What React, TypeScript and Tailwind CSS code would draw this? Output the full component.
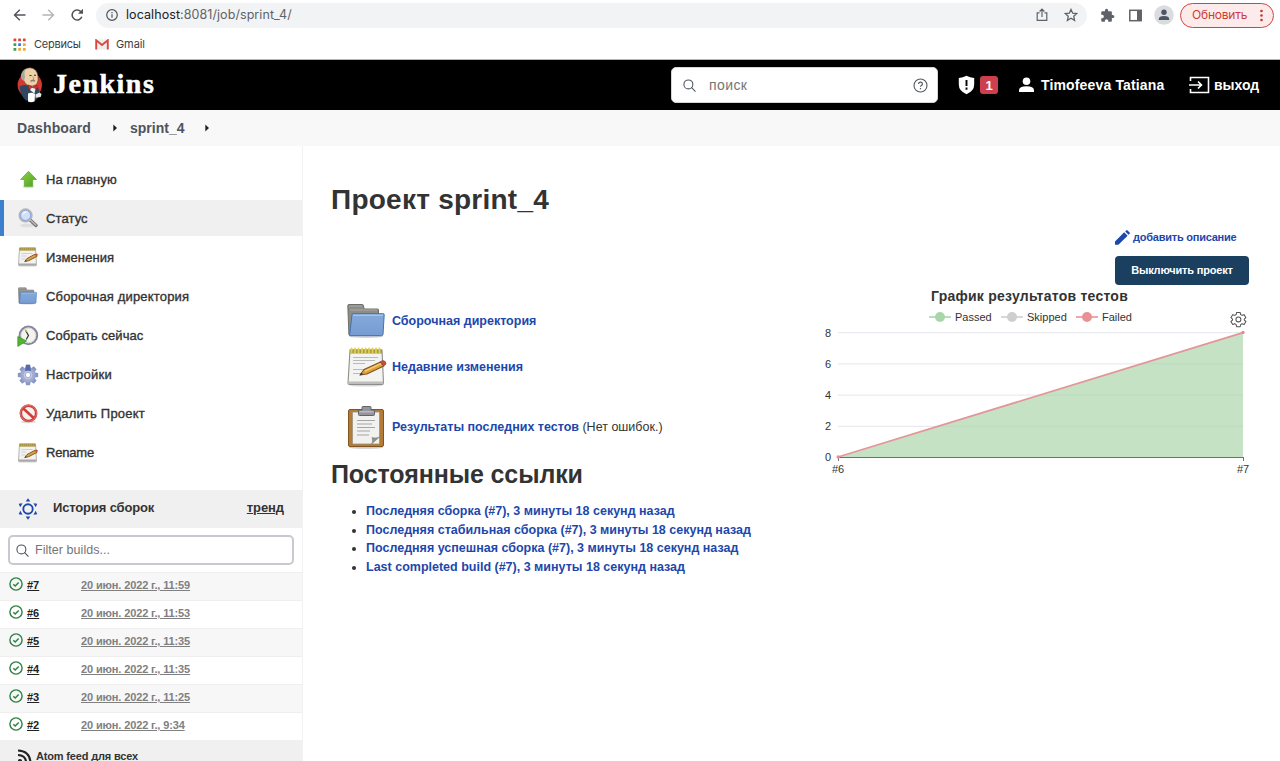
import type { ReactNode } from 'react';

type IconProps = { className?: string };

function ArrowUp() {
  return (
    <svg width="21" height="21" viewBox="0 0 20 20">
      <defs>
        <linearGradient id="up" x1="0" y1="0" x2="1" y2="1">
          <stop offset="0" stopColor="#8fd44a" />
          <stop offset="1" stopColor="#4f9e1f" />
        </linearGradient>
      </defs>
      <ellipse cx="10" cy="17" rx="6" ry="1.3" fill="#ddd" />
      <path d="M10 2.2 17.6 10H14v6.5H6V10H2.6z" fill="url(#up)" stroke="#5fae38" strokeWidth=".8" strokeLinejoin="round" />
    </svg>
  );
}

function Magnifier() {
  return (
    <svg width="20" height="20" viewBox="0 0 20 20">
      <ellipse cx="9" cy="17.4" rx="7" ry="1.8" fill="#dedede" />
      <path d="M12.4 12.2 18 17.4" stroke="#777" strokeWidth="3.4" strokeLinecap="round" />
      <path d="M12.6 12.2 17.8 17" stroke="#bdbdbd" strokeWidth="1.3" strokeLinecap="round" />
      <circle cx="7.6" cy="7.4" r="6.1" fill="#cfe0f8" stroke="#b3b5be" strokeWidth="2" />
      <circle cx="7.6" cy="7.4" r="5" fill="none" stroke="#7d9be0" strokeWidth=".8" />
      <path d="M4 7.5a4 4 0 0 1 6-3.6C8 4.500 5.500 5.500 4 7.500z" fill="#f4f9ff" />
    </svg>
  );
}

function NotepadSmall() {
  return (
    <svg width="20" height="20" viewBox="0 0 20 20">
      <path d="M1.500 1h16l1 16.500q0 1.300-1 1.300h-16q-1 0-1-1.300z" fill="#f2f2f0" stroke="#a3a3a0" strokeWidth=".8" />
      <path d="M.6 16.500h17.800v2H.6z" fill="#a9a9a7" />
      <path d="M1.500.6h16v3h-16z" fill="#a8923c" />
      <path d="M3 2h13" stroke="#cdb957" strokeWidth="1" strokeDasharray="1.200 .8" />
      <path d="M3.500 6.500h11M3.500 9h5M3.500 12h4" stroke="#c9c9cd" strokeWidth=".8" />
      <path d="M6.800 14.500l2.200-3 8-4.300 2 2.200-8.300 4.300z" fill="#d9a044" stroke="#7a5420" strokeWidth=".9" strokeLinejoin="round" />
      <path d="M16.700 7.300l1.500-.8q1.700.2 1.700 1.800l-1.500.9z" fill="#cc4a3d" />
      <path d="M6.400 14.800l1.200-1.600 1.200.9z" fill="#333" />
    </svg>
  );
}

function Notepad() {
  return (
    <svg width="40" height="40" viewBox="0 0 40 40">
      <ellipse cx="19" cy="38" rx="17" ry="1.600" fill="#d8d8d8" />
      <path d="M3 3h32l1.500 33a1.500 1.500 0 0 1-1.500 1.500H2.500A1.500 1.500 0 0 1 1 36z" fill="#f3f3f1" stroke="#8d8d8a" strokeWidth="1.100" />
      <path d="M1.500 34.500h34.800v2.500H1.500z" fill="#bdbdba" />
      <path d="M3 2.500h32v4H3z" fill="#a59a4c" />
      <path d="M4.500 1.500v4.500M8 1.500v4.500M11.500 1.500v4.500M15 1.500v4.500M18.500 1.500v4.500M22 1.500v4.500M25.500 1.500v4.500M29 1.500v4.500M32.500 1.500v4.500" stroke="#e2cf4e" strokeWidth="1.800" strokeLinecap="round" />
      <path d="M6 10.500h25M6 13.500h22M6 16.500h12M6 22.500h13M6 26.500h10" stroke="#b9b9c0" strokeWidth="1" />
      <path d="M13 28l4-5.500 16.500-7.500 3.300 4-17 8z" fill="#e0a13a" stroke="#7a5420" strokeWidth="1.100" strokeLinejoin="round" />
      <path d="M18 24.200l16-7.500" stroke="#f6cf78" strokeWidth="1.300" />
      <path d="M33 14.800l3-1.300q3.200.5 3 3.500L36.800 19z" fill="#cc4a3d" stroke="#9b4438" strokeWidth=".7" />
      <path d="M12.500 28.400l1.700-2.600 2 1.500z" fill="#333" />
    </svg>
  );
}

function Folder({ size }: { size: number }) {
  return (
    <svg width={size} height={size} viewBox="0 0 40 40">
      <defs>
        <linearGradient id="fold" x1="0" y1="0" x2="0" y2="1">
          <stop offset="0" stopColor="#86a9da" />
          <stop offset="1" stopColor="#759cd3" />
        </linearGradient>
      </defs>
      <ellipse cx="19" cy="35.500" rx="17" ry="1.500" fill="#d4d4d4" />
      <path d="M.8 4.500q0-1 1-1h13.500q1 0 1.200 1l.5 3.500h13.500q1 0 1 1V34.500H3q-1 0-1.100-1z" fill="#8c8c88" stroke="#6d6d6a" strokeWidth="1" />
      <path d="M2 5h13M3 9h27" stroke="#aaa9a5" strokeWidth="1" />
      <path d="M6 12.700h30.300q1 0 .9 1L36 33.500q-.1 1.200-1.500 1.200H3.500q-1 0-.8-1L5 13.700q.1-1 1-1z" fill="url(#fold)" stroke="#4470b4" strokeWidth="1" />
      <path d="M6 14.200h30" stroke="#b8cfee" strokeWidth="1" />
    </svg>
  );
}

function BuildClock() {
  return (
    <svg width="22" height="22" viewBox="0 0 22 22">
      <circle cx="11.400" cy="10.400" r="8.800" fill="#f4f4ee" stroke="#83859a" strokeWidth="2" />
      <circle cx="11.400" cy="10.400" r="7.400" fill="none" stroke="#c9cad6" strokeWidth=".8" />
      <path d="M8.500 5.200l3 5.300-2.300 4" fill="none" stroke="#333" strokeWidth="1.200" />
      <path d="M8 4.500l2 2" stroke="#d9bd45" strokeWidth="1.500" />
      <path d="M.8 11.500 9.600 16 .8 21.400z" fill="#52b52f" stroke="#3a8c22" strokeWidth=".7" />
    </svg>
  );
}

function Cog() {
  return (
    <svg width="22" height="22" viewBox="0 0 22 22">
      <g fill="#8a98c6">
        {[0, 45, 90, 135, 180, 225, 270, 315].map((a) => (
          <path key={a} d="M9 .8h4l.8 5H8.200z" transform={`rotate(${a} 11 11)`} />
        ))}
      </g>
      <circle cx="11" cy="11" r="7.400" fill="#a3add2" stroke="#8f9ac4" strokeWidth=".6" />
      <path d="M9 .8h4l1 6.200H8z" fill="#586ba8" />
      <circle cx="11" cy="11" r="4.300" fill="#c6cce4" />
      <circle cx="11" cy="11" r="2.700" fill="#fff" stroke="#8f9ac4" strokeWidth=".8" />
    </svg>
  );
}

function Forbidden() {
  return (
    <svg width="21" height="21" viewBox="0 0 20 20">
      <ellipse cx="10" cy="18" rx="7" ry="1.400" fill="#e5dcdc" />
      <circle cx="10" cy="9.800" r="7.300" fill="#f6f2f2" stroke="#cf3f3a" strokeWidth="2.500" />
      <path d="M4.800 5 15.200 14.600" stroke="#cf3f3a" strokeWidth="2.500" />
      <circle cx="10" cy="9.800" r="7.700" fill="none" stroke="#e88480" strokeWidth=".7" />
    </svg>
  );
}

function Clipboard() {
  return (
    <svg width="40" height="44" viewBox="0 0 40 44">
      <ellipse cx="19" cy="42.500" rx="17" ry="1.300" fill="#ccc" />
      <rect x="1.500" y="4.500" width="35" height="37" rx="1.500" fill="#b27b38" stroke="#83561f" strokeWidth="1" />
      <path d="M5.500 7h27v32h-27z" fill="#f1f1f0" stroke="#9d9380" strokeWidth=".8" />
      <path d="M10 15.500h18M10 19h15M10 22.500h18M10 26h13M10 30h12" stroke="#a5a5a5" strokeWidth="1" />
      <path d="M24.500 39c1.500-2 1-4.500.5-6.500 2.500.8 5 .5 7.500-.5z" fill="#8f9088" stroke="#777" strokeWidth=".5" />
      <path d="M15 5V2.500q0-1 1-1h7q1 0 1 1V5h2.500q1 0 1 1v3.500q0 1-1 1h-14q-1 0-1-1V6q0-1 1-1z" fill="#95959b" stroke="#63636b" strokeWidth="1" />
      <path d="M12.500 6.800h14.200" stroke="#c3c3c9" strokeWidth="1.200" />
    </svg>
  );
}

function Butler() {
  return (
    <svg width="26" height="36" viewBox="0 0 26 36">
      <ellipse cx="12.800" cy="18" rx="12.200" ry="12.500" fill="#d33833" />
      <path d="M2.500 19.500Q9 16.500 14 20l7 .5 2.500 7-5 6H9Q3.500 29 2.500 19.500z" fill="#2f4763" />
      <path d="M13 19.500h6l-1.500 7-4-3z" fill="#f5f3ea" />
      <path d="M5 7.500Q6 1 13 .8q7 .4 8 8.700 1 9-5.500 9.500Q9 19.500 6.500 13z" fill="#efd0a7" stroke="#5b4a3c" strokeWidth=".6" />
      <path d="M3.800 8.500Q5 3.500 8.200 2.500 6.800 6 8 10l-1 4Q3.600 12.500 3.800 8.500z" fill="#a9a69c" />
      <path d="M12.500 8.500h2M17 8.300h2" stroke="#33312c" strokeWidth="1.100" />
      <path d="M16 9.500l1 3-1.500.3" fill="none" stroke="#a77e5b" strokeWidth=".7" />
      <path d="M13.500 14.300q2-1.300 4.500-.3" stroke="#88806f" strokeWidth="1.400" fill="none" />
      <path d="M11.500 18l4 2 4.500-2v4l-4.500-1.500-4 1.700z" fill="#d33833" stroke="#7d1d1b" strokeWidth=".5" />
      <path d="M11 26.500q4-1.500 7 .5l-.5 7.500q-4 1.500-6.500 0z" fill="#fff" />
      <path d="M18.500 27.500l4-2 2 1.500-.8 3-5 .8z" fill="#e9e5df" />
    </svg>
  );
}

function Loupe({ size, className }: { size: number } & IconProps) {
  return (
    <svg width={size} height={size} viewBox="0 0 14 14" fill="none" stroke="#4d545d" strokeWidth="1.150" strokeLinecap="round" className={className}>
      <circle cx="5.800" cy="5.800" r="4.800" />
      <path d="m9.300 9.300 3.900 3.900" />
    </svg>
  );
}

function SunIcon() {
  return (
    <svg width="20" height="22" viewBox="0 0 20 22">
      <circle cx="10" cy="11" r="4.700" fill="none" stroke="#1d47ab" strokeWidth="1.900" />
      {[0, 60, 120, 180, 240, 300].map((a) => (
        <path key={a} d="M10 .3l2.300 3.100H7.700z" fill="#1d47ab" transform={`rotate(${a} 10 11)`} />
      ))}
    </svg>
  );
}

const tasks: { label: string; icon: ReactNode; active?: boolean; text: string }[] = [
  { label: 'На главную', icon: <ArrowUp />, text: 'tracking-[0.1px]' },
  { label: 'Статус', icon: <Magnifier />, active: true, text: 'tracking-[0.1px]' },
  { label: 'Изменения', icon: <NotepadSmall />, text: 'tracking-[0.1px]' },
  { label: 'Сборочная директория', icon: <Folder size={20} />, text: 'tracking-[0.17px]' },
  { label: 'Собрать сейчас', icon: <BuildClock />, text: 'tracking-[0.1px]' },
  { label: 'Настройки', icon: <Cog />, text: 'tracking-[0.25px]' },
  { label: 'Удалить Проект', icon: <Forbidden />, text: 'tracking-[0.2px]' },
  { label: 'Rename', icon: <NotepadSmall />, text: 'tracking-[-0.2px]' },
];

const builds = [
  ['#7', '20 июн. 2022 г., 11:59'],
  ['#6', '20 июн. 2022 г., 11:53'],
  ['#5', '20 июн. 2022 г., 11:35'],
  ['#4', '20 июн. 2022 г., 11:35'],
  ['#3', '20 июн. 2022 г., 11:25'],
  ['#2', '20 июн. 2022 г., 9:34'],
];

const permalinks = [
  'Последняя сборка (#7), 3 минуты 18 секунд назад',
  'Последняя стабильная сборка (#7), 3 минуты 18 секунд назад',
  'Последняя успешная сборка (#7), 3 минуты 18 секунд назад',
  'Last completed build (#7), 3 минуты 18 секунд назад',
];

function BrowserBar() {
  const dots = ['#d9463b', '#d9463b', '#d9463b', '#3f9d57', '#3b78e0', '#eda93b', '#3f9d57', '#eda93b', '#eda93b'];
  return (
    <div className="h-[60px] border-b border-[#b5b5b5] bg-white font-[Inter,sans-serif] text-[#3c4043]">
      <div className="flex h-[30px] items-center pl-[13px]">
        <svg width="72" height="14" viewBox="0 0 72 14" fill="none" strokeWidth="1.400">
          <path d="M12.500 7H1.500M6.800 1.700 1.500 7l5.300 5.300" stroke="#50545a" />
          <path d="M29.500 7h11M35.200 1.700 40.500 7l-5.300 5.300" stroke="#b3b5b8" />
          <path d="M68.800 8.800A5 5 0 1 1 67.500 3.300l1.500 1.500" stroke="#50545a" strokeWidth="1.600" />
          <path d="M70 .8v5h-5z" fill="#50545a" />
        </svg>
        <div className="ml-[11px] flex h-[25px] w-[991px] items-center rounded-full bg-[#f1f3f4] pl-[10px] pr-[9px]">
          <svg width="12" height="12" viewBox="0 0 12 12" fill="none" stroke="#50545a" strokeWidth="1.200">
            <circle cx="6" cy="6" r="5.300" />
            <path d="M6 5.300v3.500M6 3.100v1.200" />
          </svg>
          <div className="ml-[8px] text-[12.5px] tracking-[0.07px] text-[#5f6368]">
            <span className="text-[#202124]">localhost</span>:8081/job/sprint_4/
          </div>
          <svg className="ml-auto" width="12" height="14" viewBox="0 0 12 14" fill="none" stroke="#5f6368" strokeWidth="1.200">
            <path d="M3.500 4.800H1.200v7.600h9.600V4.800H8.500M6 9V1.300M3.600 3.500 6 1.200l2.400 2.300" />
          </svg>
          <svg className="ml-[16px]" width="14" height="14" viewBox="0 0 24 24" fill="none" stroke="#5f6368" strokeWidth="2.200">
            <path d="m12 2.500 2.900 6.400 7 .7-5.200 4.700 1.500 6.900-6.200-3.600-6.200 3.600 1.500-6.900L2.100 9.600l7-.7z" />
          </svg>
        </div>
        <svg className="ml-[13px]" width="15" height="15" viewBox="0 0 24 24" fill="#5f6368">
          <path d="M20.500 11H19V7c0-1.100-.9-2-2-2h-4V3.500a2.500 2.500 0 0 0-5 0V5H4c-1.100 0-2 .9-2 2v3.800h1.500a2.700 2.700 0 0 1 0 5.400H2V20c0 1.100.9 2 2 2h3.800v-1.500a2.700 2.700 0 0 1 5.400 0V22H17c1.100 0 2-.9 2-2v-4h1.500a2.500 2.500 0 0 0 0-5z" />
        </svg>
        <svg className="ml-[14px]" width="13" height="13" viewBox="0 0 13 13">
          <rect x=".8" y="1.300" width="11.400" height="10.400" fill="#fff" stroke="#5f6368" strokeWidth="1.500" />
          <path d="M8 1h4.500v11H8z" fill="#5f6368" />
        </svg>
        <svg className="ml-[12px]" width="20" height="20" viewBox="0 0 20 20">
          <circle cx="10" cy="10" r="9.800" fill="#dadce0" />
          <circle cx="10" cy="7.300" r="2.700" fill="#4c5564" />
          <path d="M4.800 15v-1q0-3 5.200-3t5.200 3v1z" fill="#4c5564" />
        </svg>
        <div className="ml-[6px] flex h-[25px] w-[94px] items-center rounded-full border border-[#d1443c] bg-[#fcebea] pl-[11px] text-[12px] tracking-[-0.2px] text-[#cf3b33]">
          Обновить
          <svg className="ml-auto mr-[10px]" width="3" height="13" viewBox="0 0 3 13" fill="#c5372f">
            <circle cx="1.500" cy="2" r="1.300" />
            <circle cx="1.500" cy="6.500" r="1.300" />
            <circle cx="1.500" cy="11" r="1.300" />
          </svg>
        </div>
      </div>
      <div className="flex h-[29px] items-center pl-[13px] text-[11px]">
        <svg width="13" height="13" viewBox="0 0 13 13">
          {dots.map((c, i) => (
            <rect key={i} x={0.5 + (i % 3) * 4.700} y={0.5 + Math.floor(i / 3) * 4.700} width="2.800" height="2.800" rx=".5" fill={c} />
          ))}
        </svg>
        <span className="ml-[8px] w-[47px] whitespace-nowrap tracking-[-0.25px]">Сервисы</span>
        <svg className="ml-[14px]" width="14" height="11" viewBox="0 0 14 11">
          <path d="M1 .5h12v10H1z" fill="#eee" />
          <path d="M1.200 10.500V1.300L7 6l5.800-4.700v9.200" fill="none" stroke="#d64b3f" strokeWidth="1.900" />
        </svg>
        <span className="ml-[7px] tracking-[-0.1px]">Gmail</span>
      </div>
    </div>
  );
}

function Header() {
  return (
    <header className="flex h-[50px] items-center bg-black text-white">
      <div className="ml-[17px] flex items-center">
        <Butler />
        <span className="ml-[10px] pb-[2px] font-['Liberation_Serif','Times_New_Roman',serif] text-[28px] font-bold tracking-[1.5px] [-webkit-text-stroke:0.5px_#fff]">Jenkins</span>
      </div>
      <div className="ml-auto flex h-[36px] w-[267px] items-center rounded-[5px] border border-[#d5d5d5] bg-white pl-[11px] pr-[9px]">
        <Loupe size={13} />
        <span className="ml-[13px] text-[14px] tracking-[0.4px] text-[#757575]">поиск</span>
        <svg className="ml-auto" width="15" height="15" viewBox="0 0 15 15" fill="none" stroke="#555a60">
          <circle cx="7.500" cy="7.500" r="6.500" strokeWidth="1.100" />
          <path d="M5.600 6q0-1.900 1.900-1.900T9.400 5.900q0 1-1 1.600-.9.500-.9 1.300M7.500 10v1.300" strokeWidth="1.200" />
        </svg>
      </div>
      <svg className="ml-[20px]" width="17" height="20" viewBox="0 0 17 20">
        <path d="M8.500.8q3.500 2 7.700 2.300v6.400q0 6.500-7.700 9.700Q.8 16 .8 9.500V3.100Q5 2.800 8.500.8z" fill="#fff" />
        <path d="M8.500 5v6M8.500 12.600v2.100" stroke="#000" strokeWidth="1.900" />
      </svg>
      <span className="ml-[5px] grid h-[18px] w-[18px] place-items-center rounded-[3px] bg-[#cc404d] text-[13px] font-bold">1</span>
      <svg className="ml-[21px]" width="15" height="16" viewBox="0 0 15 16" fill="#fff">
        <circle cx="7.500" cy="4.300" r="3.800" />
        <path d="M0 15v-1.800q0-4 7.500-4t7.500 4V15z" />
      </svg>
      <span className="ml-[7px] w-[124px] whitespace-nowrap text-[14px] font-bold tracking-[0.15px]">Timofeeva Tatiana</span>
      <svg className="ml-[24px]" width="21" height="18" viewBox="0 0 21 18" fill="none" stroke="#fff" strokeWidth="1.600">
        <path d="M1.500 5V1.500h18v15h-18V13M0 9h12M9 5.500 12.500 9 9 12.500" />
      </svg>
      <span className="ml-[4px] mr-[21px] w-[45px] whitespace-nowrap text-[14px] font-bold">выход</span>
    </header>
  );
}

function Caret({ className }: IconProps) {
  return (
    <svg className={className} width="4" height="8" viewBox="0 0 4 8">
      <path d="M.3.500 4 4 .3 7.500z" fill="#222" />
    </svg>
  );
}

function Sidebar() {
  return (
    <aside className="w-[303px] shrink-0 border-r border-[#f2f2f2]">
      <nav className="flex h-[344px] flex-col gap-[3.15px] pt-[15px]">
        {tasks.map((t) => (
          <a
            key={t.label}
            className={`flex h-[36px] shrink-0 items-center border-l-4 ${t.active ? 'border-[#3b7fcf] bg-[#f0f0f0]' : 'border-transparent'}`}
          >
            <span className="ml-[12px] grid w-[24px] place-items-center">{t.icon}</span>
            <span className={`ml-[6px] text-[13px] text-[#333] [-webkit-text-stroke:0.35px_#333] ${t.text}`}>{t.label}</span>
          </a>
        ))}
      </nav>
      <div className="flex h-[38px] items-center bg-[#f0f0f0] pl-[18px] pr-[18px] text-[13px] font-bold text-[#333]">
        <SunIcon />
        <span className="ml-[15px] pb-[3px] tracking-[-0.15px]">История сборок</span>
        <a className="ml-auto pb-[3px] tracking-[-0.1px] underline">тренд</a>
      </div>
      <div className="ml-[8px] mt-[7px] flex h-[30px] w-[286px] items-center rounded-[5px] border-2 border-[#c6c9cf] pl-[6px]">
        <Loupe size={13} />
        <span className="ml-[6px] text-[12.500px] tracking-[0.05px] text-[#757575]">Filter builds...</span>
      </div>
      <div className="mt-[7px]">
        {builds.map(([n, d], i) => (
          <div key={n} className={`flex h-[28px] items-center border-t border-[#efefef] pb-[2px] pl-[9px] text-[11px] font-bold ${i % 2 ? 'bg-white' : 'bg-[#f7f7f7]'}`}>
            <svg className="mb-[3px]" width="14" height="14" viewBox="0 0 14 14" fill="none" stroke="#2f8046" strokeWidth="1.400">
              <circle cx="7" cy="7" r="6.100" />
              <path d="m4.300 7.200 1.900 1.800 3.500-3.600" strokeWidth="1.500" />
            </svg>
            <a className="ml-[4px] w-[54px] text-[#222]"><span className="underline">{n}</span></a>
            <a className="tracking-[-0.13px] text-[#808080] underline">{d}</a>
          </div>
        ))}
        <div className="flex h-[34px] items-center bg-[#f0f0f0] pb-[2px] pl-[18px] text-[11px] font-bold text-[#333]">
          <svg width="14" height="14" viewBox="0 0 14 14" fill="none" stroke="#222" strokeWidth="2.200">
            <path d="M0 1.500q12 .5 12.500 12.500M0 6q8 .3 8.200 8" />
            <circle cx="2" cy="12" r="1" fill="#222" />
          </svg>
          <a className="ml-[4px] tracking-[-0.17px] underline">Atom feed для всех</a>
        </div>
      </div>
    </aside>
  );
}

function LegendItem({ label, color, x }: { label: string; color: string; x: number }) {
  return (
    <g>
      <path d={`M${x} 27h22`} stroke={color} strokeWidth="1.600" />
      <circle cx={x + 11} cy="27" r="5" fill={color} />
      <text x={x + 26} y="31" fontSize="11" fill="#333">{label}</text>
    </g>
  );
}

function TrendChart() {
  return (
    <svg width="440" height="194" viewBox="0 -4 440 194" className="block font-['Liberation_Sans',Arial,sans-serif]">
      <text x="111" y="11" fontSize="14" fontWeight="700" fill="#333" letterSpacing=".25">График результатов тестов</text>
      <LegendItem label="Passed" color="#a9d6a8" x={109} />
      <LegendItem label="Skipped" color="#cfcfcf" x={181} />
      <LegendItem label="Failed" color="#ea9195" x={256} />
      <g transform="translate(410 21) scale(.7)" fill="none" stroke="#555" strokeWidth="1.500" strokeLinejoin="round">
        <circle cx="12" cy="12" r="3.500" />
        <path d="M9.500 2h5l.7 3 2 1.200 3-1 2.500 4.300-2.300 2v1.500l2.300 2-2.500 4.300-3-1-2 1.200-.7 3h-5l-.7-3-2-1.200-3 1L1.300 15l2.300-2v-1.500l-2.300-2 2.500-4.300 3 1 2-1.200z" />
      </g>
      {[0, 1, 2, 3, 4].map((i) => (
        <g key={i}>
          <path d={`M18 ${167.500 - i * 31.200}h405`} stroke="#e4e6ec" />
          <text x="11" y={171.300 - i * 31.200} fontSize="11" fill="#333" textAnchor="end">{i * 2}</text>
        </g>
      ))}
      <path d="M18 167.500 423 42.700v124.800z" fill="#a9d3a7" fillOpacity=".66" />
      <path d="M18 167.500h405.500M18.500 167v4M423.500 167v4" fill="none" stroke="#6e7079" />
      <path d="M18 167 423 42.700" stroke="#e39599" strokeWidth="1.800" />
      <circle cx="18.200" cy="167" r="1.700" fill="#ea8c91" />
      <circle cx="423" cy="42.500" r="1.700" fill="#ea8c91" />
      <text x="18" y="183" fontSize="11" fill="#333" textAnchor="middle">#6</text>
      <text x="423" y="183" fontSize="11" fill="#333" textAnchor="middle">#7</text>
    </svg>
  );
}

export default function App() {
  return (
    <div className="flex h-[761px] w-[1280px] flex-col overflow-hidden bg-white font-['Liberation_Sans',Arial,sans-serif] leading-none">
      <BrowserBar />
      <Header />
      <div className="flex h-[36px] shrink-0 items-center bg-[#f8f8f8] pl-[17px] text-[14px] font-bold text-[#4d545d]">
        <span className="w-[74px] tracking-[0.1px]">Dashboard</span>
        <Caret className="ml-[22px]" />
        <span className="ml-[13px] w-[55px]">sprint_4</span>
        <Caret className="ml-[20px]" />
      </div>
      <div className="flex min-h-0 flex-1 overflow-hidden">
        <Sidebar />
        <main className="flex flex-1 justify-between pl-[28px] pr-[15px] text-[12.5px] text-[#333]">
          <div className="whitespace-nowrap">
            <h1 className="mt-[40px] h-[28px] text-[28px] font-bold tracking-[0.25px]">Проект sprint_4</h1>
            <ul className="mt-[84px] pl-[16px] font-bold text-[#1d47ab]">
              <li className="flex h-[46px] items-center gap-[5px]"><Folder size={40} /><a>Сборочная директория</a></li>
              <li className="flex h-[46px] items-center gap-[5px]"><Notepad /><a>Недавние изменения</a></li>
              <li className="mt-[14px] flex h-[46px] items-center gap-[5px]">
                <Clipboard />
                <span><a>Результаты последних тестов</a><span className="font-normal text-[#333]"> (Нет ошибок.)</span></span>
              </li>
            </ul>
            <h2 className="mt-[12px] h-[25px] text-[25px] font-bold tracking-[-0.1px]">Постоянные ссылки</h2>
            <ul className="mt-[15px] list-disc pl-[35px] font-bold text-[#1d47ab]">
              {permalinks.map((p) => (
                <li key={p} className="h-[18.700px] leading-[18.700px] marker:text-[#333]">{p}</li>
              ))}
            </ul>
          </div>
          <div className="w-[445px] pt-[83px]">
            <div className="ml-[295px] flex h-[16px] items-center gap-[3px] whitespace-nowrap text-[11px] font-bold tracking-[-0.23px] text-[#1d47ab]">
              <svg width="15" height="15" viewBox="0 0 15 15" fill="#1d47ab">
                <path d="M0 14.800v-3.300L9.200 2.300l3.400 3.400-9.200 9.100zM10.200 1.400l1-1q.7-.6 1.400 0l2 2q.6.700 0 1.300l-1.100 1.100z" />
              </svg>
              добавить описание
            </div>
            <button className="ml-[295px] mt-[11px] block h-[29px] w-[134px] rounded-[4px] bg-[#1b3f5f] text-[11px] font-bold tracking-[-0.17px] text-white">Выключить проект</button>
            <div className="mt-[1px]"><TrendChart /></div>
          </div>
        </main>
      </div>
    </div>
  );
}
